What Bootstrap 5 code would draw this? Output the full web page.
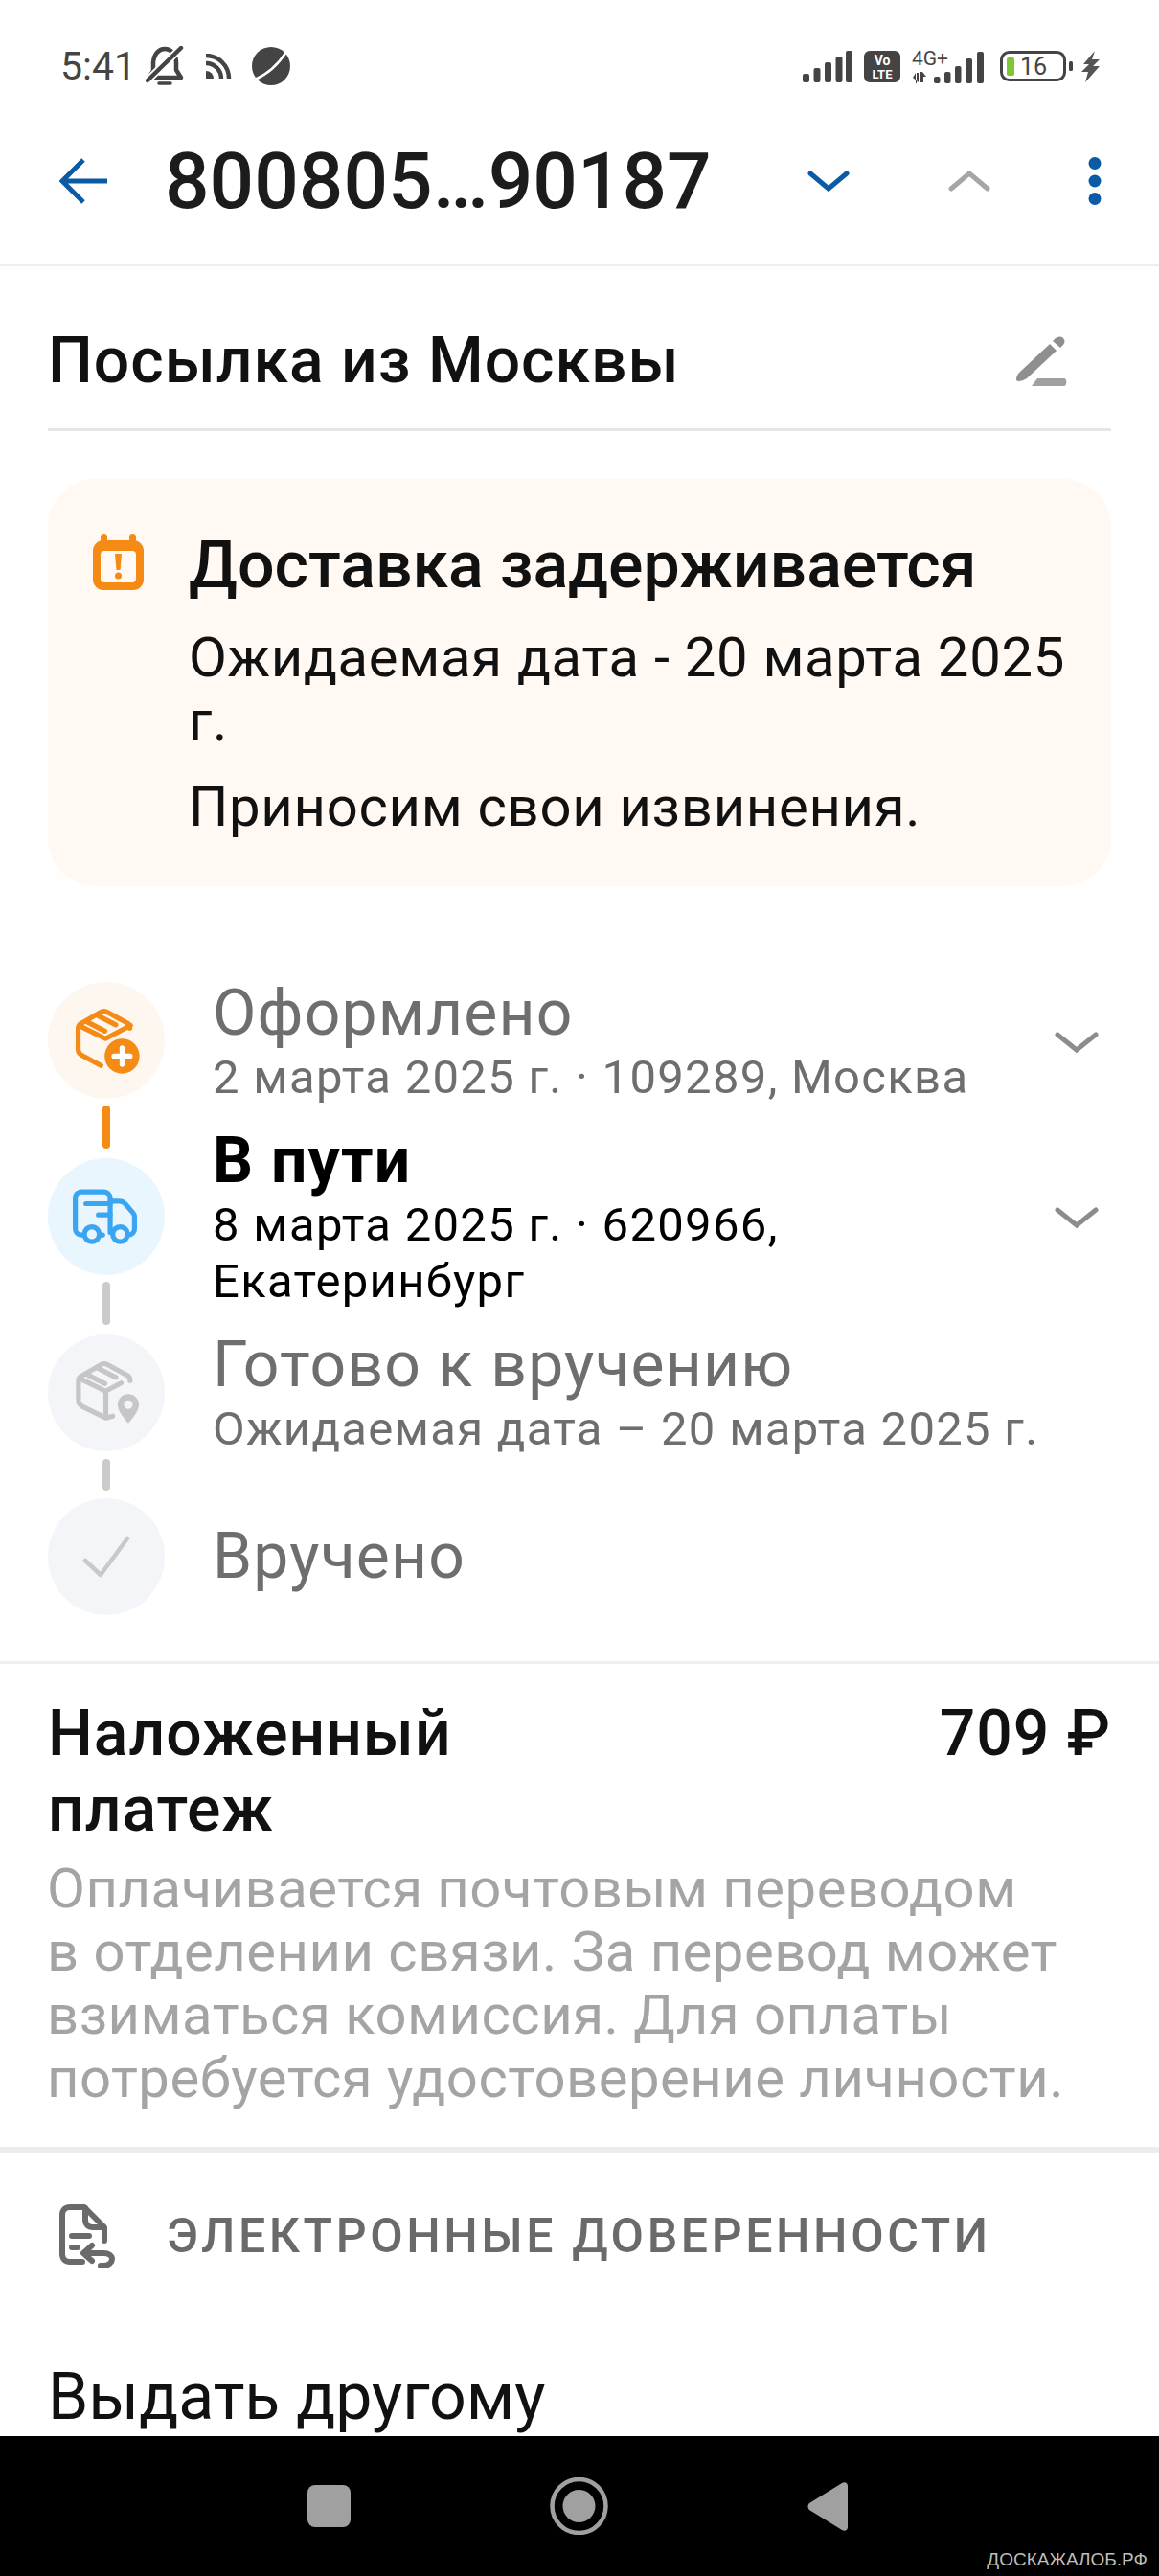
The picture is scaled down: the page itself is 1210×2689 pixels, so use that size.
<!DOCTYPE html>
<html lang="ru">
<head>
  <meta charset="UTF-8" />
  <meta name="viewport" content="width=device-width, initial-scale=1.0"/>
  <title>Посылка из Москвы</title>

  <!-- Bootstrap CSS -->
  <link href="https://cdn.jsdelivr.net/npm/bootstrap@5.3.3/dist/css/bootstrap.min.css" rel="stylesheet" />

  <style>
    html, body { height: 100%; }
    body {
      font-family: Roboto, "Noto Sans", sans-serif;
      background-color: #fff;
      color: #1c1c1c;
      overflow: hidden;
    }
    .phone { height: 2689px; }
    .screen-body { min-height: 0; overflow: hidden; }

    /* status bar */
    .status-bar { height: 118px; padding: 20px 62px 0 63px; color: #444; }
    .status-time { font-size: 41px; line-height: 1; width: 89px; }
    .gap-bell { margin-right: 23px; }
    .gap-rss { margin-right: 20px; }

    /* toolbar */
    .app-bar { height: 160px; padding: 0 60px 16px 62px; border-bottom: 2px solid #eee; }
    .app-title { font-size: 82px; font-weight: 500; line-height: 1; margin: 0 0 0 60px; }
    .tool-down { margin-right: 103px; }
    .tool-up { margin-right: 102px; }

    .name-row { height: 172px; padding-top: 28px; border-bottom: 3px solid #e6e6e6; margin: 0 50px; }
    .name-text { font-size: 66px; font-weight: 500; line-height: 1; letter-spacing: 1px; color: #111; }
    .pencil { margin-right: 45px; }

    /* delay notice */
    .delay-box {
      height: 425px;
      margin: 50px 50px 0;
      padding: 50px 20px 0 45px;
      background-color: #fff8f3;
      border-radius: 50px;
      color: #111;
    }
    .delay-icon { margin: 7px 45px 0 0; flex: none; }
    .delay-title { font-size: 68px; font-weight: 500; line-height: 80px; margin: 0 0 23px; }
    .delay-text { font-size: 58px; line-height: 66px; margin: 0 0 24px; letter-spacing: .7px; }

    /* tracking steps */
    .steps { margin: 96px 50px 0; padding-bottom: 48px; }
    .rail { width: 122px; margin-top: 4px; flex: none; }
    .step-dot { width: 122px; height: 122px; border-radius: 50%; }
    .dot-orange { background-color: #fef7f0; }
    .dot-blue { background-color: #e9f6fe; }
    .dot-grey { background-color: #f3f5f8; }
    .rail-line { width: 8px; height: 45px; border-radius: 4px; margin: 7px 0 10px; background-color: #cbcbcb; }
    .rail-line.done { background-color: #f58a14; }
    .rail-line.short { height: 33px; margin: 8px 0 8px; }
    .step-texts { margin-left: 50px; min-width: 0; }
    .step-block { margin-bottom: 21px; color: #6e6e6e; }
    .step-block.current { color: #000; }
    .step-last { margin-top: 67px; }
    .step-title { font-size: 66px; line-height: 74px; letter-spacing: 1.2px; }
    .current .step-title { font-weight: 700; }
    .step-sub { font-size: 49px; line-height: 59px; letter-spacing: 1.3px; }
    .step-arrow { margin-left: 10px; margin-right: 13px; flex: none; }

    /* cash on delivery */
    .pay-box { border-top: 3px solid #eee; padding: 33px 50px 39px; border-bottom: 6px solid #ececec; }
    .pay-title { font-size: 66px; font-weight: 500; line-height: 79px; width: 460px; letter-spacing: 1px; color: #111; }
    .pay-sum { font-size: 66px; font-weight: 500; line-height: 79px; letter-spacing: 1px; color: #111; }
    .pay-note { font-size: 58px; line-height: 66px; color: #a4a4a4; margin: 10px 0 0 -1px; letter-spacing: .5px; }

    .proxy-row { height: 174px; padding-left: 62px; color: #6a6a6a; }
    .proxy-text { font-size: 50px; font-weight: 500; letter-spacing: 3.6px; margin-left: 54px; line-height: 1; }
    .give-other { font-size: 68px; line-height: 76px; margin: 43px 0 0 50px; color: #111; white-space: nowrap; }

    /* android nav */
    .nav-strip { height: 146px; padding-right: 5px; gap: 208px; background-color: #000; }
    .nav-square { width: 45px; height: 44px; border-radius: 8px; background-color: #a0a0a0; }
    .site-mark {
      position: absolute;
      right: 12px;
      bottom: 8px;
      font-family: "Liberation Sans", sans-serif;
      font-size: 19px;
      line-height: 1;
      color: #bdbdbd;
    }
  </style>
</head>
<body>
  <div class="phone d-flex flex-column position-relative">
    <div class="screen-body flex-grow-1">

      <!-- status bar -->
      <div class="status-bar d-flex align-items-center">
        <span class="status-time">5:41</span>
        <svg class="gap-bell" width="40" height="42" viewBox="0 0 40 42" fill="none" stroke="#444" stroke-width="4.500" stroke-linecap="round" stroke-linejoin="round">
          <path d="M3 33h34l-5-8V17C32 8 26 3 20 3S9 8 8 17v9z"/>
          <path d="M2 36 37 2" stroke="#fff" stroke-width="8"/>
          <path d="M2 36 37 2"/>
          <path d="M14 39h12" stroke-width="3.5"/>
        </svg>
        <svg class="gap-rss" width="27" height="26" viewBox="0 0 27 26" fill="none" stroke="#444" stroke-width="4.5">
          <path d="M0 26v-8a8 8 0 0 1 8 8z" fill="#444" stroke="none"/>
          <path d="M0 10a16 16 0 0 1 16 16"/>
          <path d="M0 2a24 24 0 0 1 24 24"/>
        </svg>
        <svg width="42" height="42" viewBox="0 0 42 42">
          <circle cx="21" cy="21" r="20" fill="#444"/>
          <path d="M4 35C16 30 28 20 37 6" fill="none" stroke="#fff" stroke-width="2.5" stroke-linecap="round"/>
        </svg>
        <div class="ms-auto d-flex align-items-center">
          <svg class="me-2" width="52" height="33" viewBox="0 0 52 33" fill="#444">
            <rect x="0" y="24" width="7" height="9" rx="2"/><rect x="11.5" y="18" width="7" height="15" rx="2"/><rect x="23" y="12" width="7" height="21" rx="2"/><rect x="34.5" y="6" width="7" height="27" rx="2"/><rect x="45" y="0" width="7" height="33" rx="2"/>
          </svg>
          <svg class="ms-1 me-2" width="38" height="33" viewBox="0 0 38 33">
            <rect width="38" height="33" rx="6" fill="#444"/>
            <text x="19" y="15" text-anchor="middle" fill="#fff" font-family="Roboto" font-weight="700" font-size="14">Vo</text>
            <text x="19" y="29" text-anchor="middle" fill="#fff" font-family="Roboto" font-weight="700" font-size="13">LTE</text>
          </svg>
          <svg class="ms-1" width="75" height="45" viewBox="0 -5 75 45" fill="#444">
            <text x="0" y="16" font-family="Roboto" font-size="21">4G+</text>
            <path d="M1 29l3-5v11h1V24h2v10zM9 34V23h2l4 5h-3v6z" fill="#444"/>
            <rect x="23" y="28" width="6.5" height="7" rx="2"/><rect x="34" y="23" width="6.5" height="12" rx="2"/><rect x="45" y="17" width="6.5" height="18" rx="2"/><rect x="56.5" y="9" width="6.5" height="26" rx="2"/><rect x="68" y="2" width="7" height="33" rx="2"/>
          </svg>
          <svg style="margin-left:17px" width="76" height="32" viewBox="0 0 76 32">
            <rect x="1.5" y="1.5" width="66" height="29" rx="8" fill="#fff" stroke="#444" stroke-width="3"/>
            <rect x="7" y="7" width="8" height="19" rx="2" fill="#7ec636"/>
            <text x="21" y="25" font-family="Roboto" font-size="25" fill="#444">16</text>
            <rect x="72" y="11" width="4" height="10" rx="1.5" fill="#444"/>
          </svg>
          <svg style="margin-left:9px" width="19" height="33" viewBox="0 0 19 33" fill="#555">
            <path d="M14 0 2 14h6L0 22h7L4 33 19 16h-7l7-7h-8z"/>
          </svg>
        </div>
      </div>

      <!-- toolbar -->
      <div class="app-bar d-flex align-items-center">
        <svg width="50" height="48" viewBox="0 0 50 48" fill="none" stroke="#0a5aa5" stroke-width="5">
          <path d="M50 24H4M25 2 3 24l22 22"/>
        </svg>
        <h1 class="app-title">800805…90187</h1>
        <div class="ms-auto d-flex align-items-center">
          <svg class="tool-down" width="44" height="22" viewBox="0 0 44 22" fill="none" stroke="#0a5aa5" stroke-width="5" stroke-linecap="round">
            <path d="m3 3 19 16L41 3"/>
          </svg>
          <svg class="tool-up" width="44" height="22" viewBox="0 0 44 22" fill="none" stroke="#a6a6a6" stroke-width="5" stroke-linecap="round">
            <path d="M3 19 22 3l19 16"/>
          </svg>
          <svg width="14" height="50" viewBox="0 0 14 50" fill="#0a5aa5">
            <circle cx="7" cy="6.500" r="6.500"/><circle cx="7" cy="25" r="6.500"/><circle cx="7" cy="43.500" r="6.500"/>
          </svg>
        </div>
      </div>

      <!-- name -->
      <div class="name-row d-flex align-items-center justify-content-between">
        <span class="name-text">Посылка из Москвы</span>
        <svg class="pencil" width="56" height="54" viewBox="0 0 56 54">
          <path d="M2 46c0-2 1-5 3-7L37 9l7 7-31 29c-3 2-6 3-9 3-1 0-2-1-2-2z" fill="#8f8f8f"/>
          <path d="M43 3c3-2 6-2 8 0s2 5 0 7l-3 3-8-7z" fill="#8f8f8f"/>
          <path d="M18 53 24 45h28c3 0 3 8 0 8z" fill="#a0a0a0"/>
        </svg>
      </div>

      <!-- delay notice -->
      <div class="delay-box d-flex">
        <svg class="delay-icon" width="57" height="60" viewBox="0 0 57 60">
          <rect x="2" y="7" width="53" height="52" rx="11" fill="#f58a14"/>
          <rect x="10" y="18" width="37" height="33" rx="4" fill="#fff8f3"/>
          <rect x="10" y="0" width="7" height="12" rx="3.500" fill="#f58a14"/>
          <rect x="40" y="0" width="7" height="12" rx="3.500" fill="#f58a14"/>
          <path d="M25 21h7l-1.500 17h-4z" fill="#f58a14"/><circle cx="28.500" cy="44" r="3.500" fill="#f58a14"/>
        </svg>
        <div>
          <h2 class="delay-title">Доставка задерживается</h2>
          <p class="delay-text">Ожидаемая дата - 20 марта 2025 г.</p>
          <p class="delay-text">Приносим свои извинения.</p>
        </div>
      </div>

      <!-- tracking steps -->
      <div class="steps d-flex">
        <div class="rail d-flex flex-column align-items-center">
          <div class="step-dot dot-orange d-flex align-items-center justify-content-center">
            <svg width="122" height="122" viewBox="0 0 375 375" fill="none" stroke="#f58a14" stroke-width="16" stroke-linejoin="round" stroke-linecap="round">
              <path d="M170 268 110 236c-8-4-13-10-13-20v-66c0-8 4-14 12-18l62-36c6-3 12-3 18 0l66 36c6 4 8 8 8 16"/>
              <path d="M100 140l85 42 80-42M125 128l58 30M160 108l58 30"/>
              <circle cx="238" cy="238" r="56" fill="#f58a14" stroke="none"/>
              <path d="M238 212v52M212 238h52" stroke="#fff"/>
            </svg>
          </div>
          <div class="rail-line done"></div>
          <div class="step-dot dot-blue d-flex align-items-center justify-content-center">
            <svg width="122" height="122" viewBox="0 0 375 375" fill="none" stroke="#3aa5f2" stroke-width="16" stroke-linejoin="round" stroke-linecap="round">
              <path d="M108 246c-12 0-20-8-20-20V128c0-12 8-20 20-20h70c12 0 22 8 22 20v110"/>
              <path d="M122 146h78M162 182h38"/>
              <path d="M200 138h28c8 0 14 2 20 8l24 28c4 4 6 8 6 14v38c0 12-8 20-20 20h-8M176 246h-6" />
              <circle cx="141" cy="244" r="24" fill="#e9f6fe"/>
              <circle cx="232" cy="244" r="24" fill="#e9f6fe"/>
            </svg>
          </div>
          <div class="rail-line"></div>
          <div class="step-dot dot-grey d-flex align-items-center justify-content-center">
            <svg width="122" height="122" viewBox="0 0 375 375" fill="none" stroke="#c6c6c6" stroke-width="16" stroke-linejoin="round" stroke-linecap="round">
              <path d="M208 262l-22 6-70-34c-12-6-18-12-18-22v-62c0-8 4-14 12-18l62-36c6-3 12-3 18 0l66 36c6 4 8 8 8 16"/>
              <path d="M100 140l85 42 50-26M186 182v80M125 128l58 30M160 108l58 30"/>
              <path d="M258 285c-20-24-34-42-34-60a34 34 0 0 1 68 0c0 18-14 36-34 60z" fill="#c6c6c6" stroke="none"/>
              <circle cx="258" cy="225" r="14" fill="#f3f5f8" stroke="none"/>
            </svg>
          </div>
          <div class="rail-line short"></div>
          <div class="step-dot dot-grey d-flex align-items-center justify-content-center">
            <svg width="50" height="46" viewBox="0 0 50 46" fill="none" stroke="#c9c9c9" stroke-width="4.500" stroke-linecap="round" stroke-linejoin="round">
              <path d="M3 27 19 42 47 4"/>
            </svg>
          </div>
        </div>

        <div class="step-texts flex-grow-1">
          <div class="step-block d-flex align-items-center">
            <div class="flex-grow-1">
              <div class="step-title">Оформлено</div>
              <div class="step-sub">2 марта 2025 г. · 109289, Москва</div>
            </div>
            <svg class="step-arrow" width="46" height="24" viewBox="0 0 46 24" fill="none" stroke="#8c8c8c" stroke-width="5" stroke-linecap="round"><path d="m3 4 20 16L43 4"/></svg>
          </div>
          <div class="step-block current d-flex align-items-center">
            <div class="flex-grow-1">
              <div class="step-title">В пути</div>
              <div class="step-sub">8 марта 2025 г. · 620966,<br>Екатеринбург</div>
            </div>
            <svg class="step-arrow" width="46" height="24" viewBox="0 0 46 24" fill="none" stroke="#8c8c8c" stroke-width="5" stroke-linecap="round"><path d="m3 4 20 16L43 4"/></svg>
          </div>
          <div class="step-block">
            <div class="step-title">Готово к вручению</div>
            <div class="step-sub text-nowrap">Ожидаемая дата – 20 марта 2025 г.</div>
          </div>
          <div class="step-block step-last">
            <div class="step-title">Вручено</div>
          </div>
        </div>
      </div>

      <!-- cash on delivery -->
      <div class="pay-box">
        <div class="d-flex justify-content-between align-items-start">
          <div class="pay-title">Наложенный платеж</div>
          <div class="pay-sum">709 ₽</div>
        </div>
        <p class="pay-note">Оплачивается почтовым переводом<br>в отделении связи. За перевод может<br>взиматься комиссия. Для оплаты<br>потребуется удостоверение личности.</p>
      </div>

      <div class="proxy-row d-flex align-items-center">
        <svg width="58" height="66" viewBox="0 0 58 66" fill="none" stroke="#6a6a6a" stroke-width="6" stroke-linecap="round" stroke-linejoin="round">
          <path d="M24 60H11c-5 0-8-3-8-8V11c0-5 3-8 8-8h15l21 21v14"/>
          <path d="M27 4v12c0 5 3 8 8 8h11"/>
          <path d="M13 33h18M13 45h6"/>
          <path d="M34 43 25 51l9 8M26 51h20c6 0 9 3 9 6s-3 7-9 7h-3"/>
        </svg>
        <span class="proxy-text">ЭЛЕКТРОННЫЕ ДОВЕРЕННОСТИ</span>
      </div>
      <div class="give-other">Выдать другому</div>
    </div>

    <!-- android nav -->
    <div class="nav-strip d-flex align-items-center justify-content-center flex-shrink-0">
      <div class="nav-square"></div>
      <svg width="61" height="60" viewBox="0 0 61 60" fill="none">
        <circle cx="30.500" cy="30" r="28" stroke="#a0a0a0" stroke-width="4.500"/>
        <circle cx="30.500" cy="30" r="17" fill="#a0a0a0"/>
      </svg>
      <svg width="42" height="51" viewBox="0 0 42 51" fill="#a0a0a0">
        <path d="M36 1c3-2 6 0 6 3v43c0 3-3 5-6 3L2 29c-2-2-2-5 0-7z"/>
      </svg>
    </div>
    <div class="site-mark">ДОСКАЖАЛОБ.РФ</div>
  </div>

  <script src="https://cdn.jsdelivr.net/npm/bootstrap@5.3.3/dist/js/bootstrap.bundle.min.js"></script>
</body>
</html>
